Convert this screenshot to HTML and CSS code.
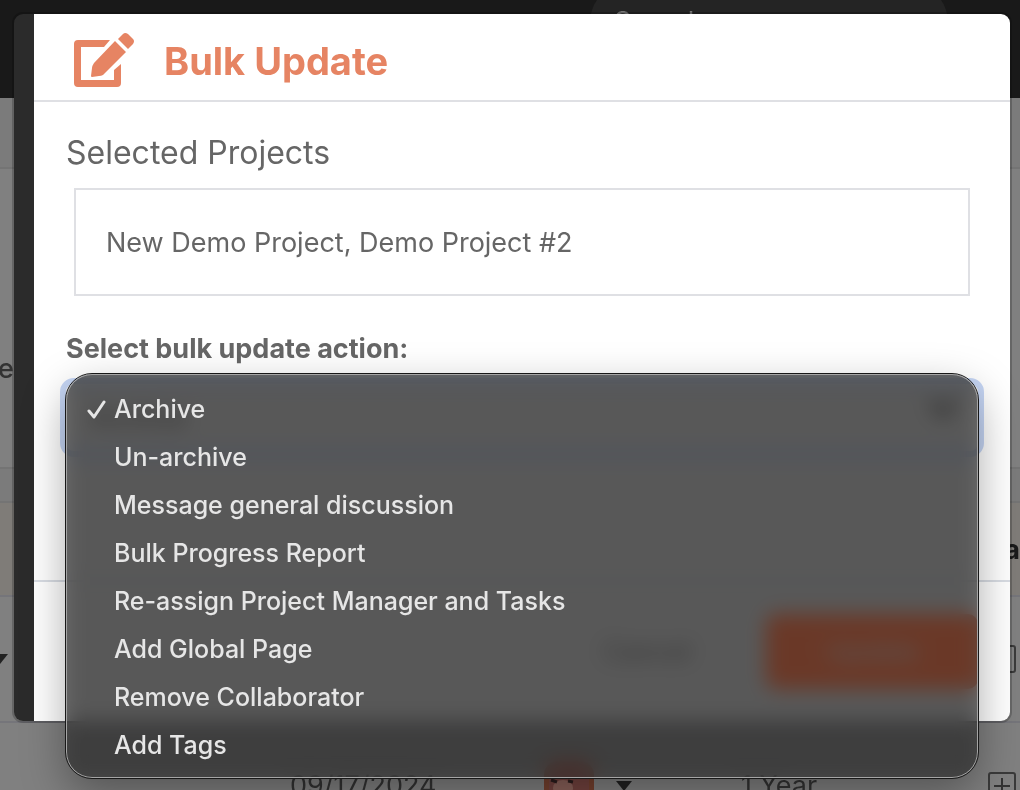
FILE: index.html
```html
<!DOCTYPE html>
<html lang="en">
<head>
  <meta charset="UTF-8">
  <title>Bulk Update</title>
  <link rel="stylesheet" href="styles.css">
</head>
<body>

  <div class="page">
    <header class="navbar">
      <div class="search">Search</div>
    </header>
    <div class="toolbar"></div>
    <div class="project-head">ec</div>
    <div class="spacer"></div>
    <table class="projects">
      <thead>
        <tr>
          <th class="col-name"></th>
          <th class="col-date"></th>
          <th class="col-owner"></th>
          <th></th>
          <th class="col-action">a</th>
        </tr>
      </thead>
      <tbody>
        <tr>
          <td><span class="caret edge"></span></td>
          <td></td>
          <td></td>
          <td></td>
          <td class="col-action"><span class="add"></span></td>
        </tr>
        <tr>
          <td></td>
          <td>09/17/2024</td>
          <td>
            <div class="owner">
              <svg class="avatar" viewBox="0 0 50 50">
                <rect width="50" height="50" rx="14" fill="#76412f"/>
                <rect x="5" y="3" width="40" height="44" rx="12" fill="#74433f"/>
                <ellipse cx="19" cy="27" rx="10" ry="8" fill="#8b625a"/>
                <path d="M7 19l6 2M24 20l5 1" stroke="#2b1c1c" stroke-width="3"/>
              </svg>
              <span class="caret"></span>
            </div>
          </td>
          <td>1 Year</td>
          <td class="col-action">
            <span class="add">
              <svg viewBox="0 0 24 24"><path d="M12 4v16M4 12h16" stroke="#333" stroke-width="2"/></svg>
            </span>
          </td>
        </tr>
      </tbody>
    </table>
  </div>

  <div class="overlay">
    <form class="modal">
      <div class="modal-header">
        <svg class="edit-icon" viewBox="0 0 60 54">
          <path d="M36 7H4Q0 7 0 11V50Q0 54 4 54H43Q47 54 47 50V31L40 37V47H7V14H30Z" fill="#e68463"/>
          <path d="M41 8L52 19L29 42Q27 43 25 43L18 44Q17 44 17 43L18 35Q18 33 20 30Z" fill="#e68463"/>
          <path d="M44 6L49 1Q51 -1 54 1L59 6Q61 8 59 11L54 16Z" fill="#e68463"/>
        </svg>
        <h1>Bulk Update</h1>
      </div>

      <div class="modal-body">
        <h2>Selected Projects</h2>
        <div class="selected">New Demo Project, Demo Project #2</div>

        <label for="action">Select bulk update action:</label>
        <div class="dropdown">
          <select id="action">
            <option>Archive</option>
          </select>
          <svg class="arrow" viewBox="0 0 24 16"><path d="M2 3l10 10L22 3" fill="none" stroke="#333" stroke-width="5"/></svg>
          <div class="menu" role="listbox">
            <button type="button" role="option" aria-selected="true">
              <svg class="check" viewBox="0 0 20 20"><path d="M2 12l5 6L17 3" fill="none" stroke="#e6e6e6" stroke-width="3" stroke-linecap="round" stroke-linejoin="round"/></svg>
              Archive
            </button>
            <button type="button" role="option">Un-archive</button>
            <button type="button" role="option">Message general discussion</button>
            <button type="button" role="option">Bulk Progress Report</button>
            <button type="button" role="option">Re-assign Project Manager and Tasks</button>
            <button type="button" role="option">Add Global Page</button>
            <button type="button" role="option">Remove Collaborator</button>
            <button type="button" role="option">Add Tags</button>
          </div>
        </div>
      </div>

      <div class="modal-footer">
        <button type="button" class="cancel">Cancel</button>
        <button type="submit" class="update">Update</button>
      </div>
    </form>
  </div>

</body>
</html>
```
FILE: styles.css
```css
* {
  box-sizing: border-box;
}

body {
  margin: 0;
  height: 100vh;
  overflow: hidden;
  background: #808080;
  font-family: Inter, "Liberation Sans", sans-serif;
  font-size: 27px;
  color: #333;
}

h1, h2 {
  margin: 0;
}

button, select {
  font: inherit;
}

/* page behind the modal */
.page {
  height: 100vh;
  overflow: hidden;
}

.navbar {
  height: 98px;
  padding: 0 72px;
  background: #191919;
  display: flex;
  justify-content: flex-end;
}

.search {
  width: 358px;
  height: 76px;
  margin-top: -16px;
  padding-left: 24px;
  border-radius: 38px;
  background: #242424;
  color: #777;
  line-height: 76px;
}

.toolbar {
  height: 71px;
  background: #7b7b7b;
  border-bottom: 2px solid #747474;
}

.project-head {
  height: 300px;
  border-bottom: 2px solid #747474;
  line-height: 400px;
  text-indent: -2px;
  font-weight: 500;
  overflow: hidden;
}

.spacer {
  height: 32px;
  background: #7b7b7b;
}

.projects {
  width: 100%;
  table-layout: fixed;
  border-collapse: collapse;
}

.projects th {
  height: 94px;
  padding: 0;
  background: #7f7c78;
  border-top: 2px solid #747474;
  color: #1a1a1a;
}

.projects td {
  height: 126px;
  padding: 0;
  border-top: 2px solid #75757a;
}

.col-name {
  width: 290px;
}

.col-date {
  width: 254px;
}

.col-owner {
  width: 197px;
}

.projects .col-action {
  text-align: right;
}

.owner {
  display: flex;
  align-items: center;
  gap: 22px;
}

.avatar {
  width: 50px;
  height: 50px;
}

.caret {
  display: block;
  border: 8px solid transparent;
  border-top: 10px solid #222;
  border-bottom: 0;
}

.caret.edge {
  width: 16px;
  margin-left: -8px;
}

.add {
  display: block;
  width: 28px;
  height: 28px;
  margin: 0 4px 0 auto;
  border: 2px solid #3a3a3a;
  border-radius: 3px;
}

.add svg {
  display: block;
}

/* modal */
.overlay {
  position: fixed;
  inset: 0;
  padding: 12px 8px;
}

.modal {
  margin-left: 4px;
  border: 2px solid rgba(0, 0, 0, 0.2);
  border-radius: 11px;
  background: linear-gradient(to right, #2b2b2b 20px, #fff 20px) padding-box;
  padding-left: 20px;
  color: #666;
}

.modal-header {
  height: 88px;
  padding: 8px 40px 0;
  border-bottom: 2px solid #dfe0e4;
  display: flex;
  align-items: center;
  gap: 30px;
}

.edit-icon {
  width: 60px;
  height: 54px;
  margin-bottom: 2px;
  overflow: visible;
}

.modal-header h1 {
  font-size: 38px;
  font-weight: 700;
  line-height: 46px;
  color: #e68463;
}

.modal-body {
  padding: 30px 32px 0;
}

.modal-body h2 {
  font-size: 32px;
  font-weight: 400;
  line-height: 42px;
}

.selected {
  margin: 14px 8px 32px;
  padding: 33px 30px 31px;
  border: 2px solid #dfe0e4;
  line-height: 40px;
}

.modal-body label {
  display: block;
  font-weight: 700;
  line-height: 42px;
}

.dropdown {
  position: relative;
  margin-top: 14px;
}

.dropdown select {
  display: block;
  width: 100%;
  height: 67px;
  padding: 0 24px;
  appearance: none;
  border: 0;
  border-radius: 8px;
  outline: 6px solid #c6d6f5;
  background: #fff;
  color: #333;
}

.arrow {
  position: absolute;
  right: 20px;
  top: 14px;
  width: 30px;
}

.menu {
  position: absolute;
  top: -10px;
  left: 0;
  right: 0;
  padding: 10px 0 8px;
  border: 1px solid #a5a5a5;
  border-radius: 26px;
  outline: 1px solid #181818;
  background: rgba(50, 50, 50, 0.7);
  backdrop-filter: blur(10px) brightness(0.7) saturate(2.4);
  box-shadow: 0 16px 44px rgba(0, 0, 0, 0.34);
  font-size: 25px;
  font-weight: 500;
}

.menu button {
  display: flex;
  align-items: center;
  position: relative;
  width: 100%;
  height: 48px;
  padding: 0 47px;
  border: 0;
  background: none;
  color: #e6e6e6;
  text-align: left;
}

.check {
  position: absolute;
  left: 20px;
  width: 20px;
  height: 20px;
}

.modal-footer {
  margin-top: 129px;
  padding: 32px;
  border-top: 2px solid #d9dde4;
  display: flex;
  justify-content: flex-end;
  gap: 24px;
}

.modal-footer button {
  height: 75px;
  border: 0;
  border-radius: 10px;
}

.cancel {
  width: 190px;
  background: #fff;
  color: #555;
}

.update {
  width: 212px;
  background: #e58260;
  color: #fff;
}
```
